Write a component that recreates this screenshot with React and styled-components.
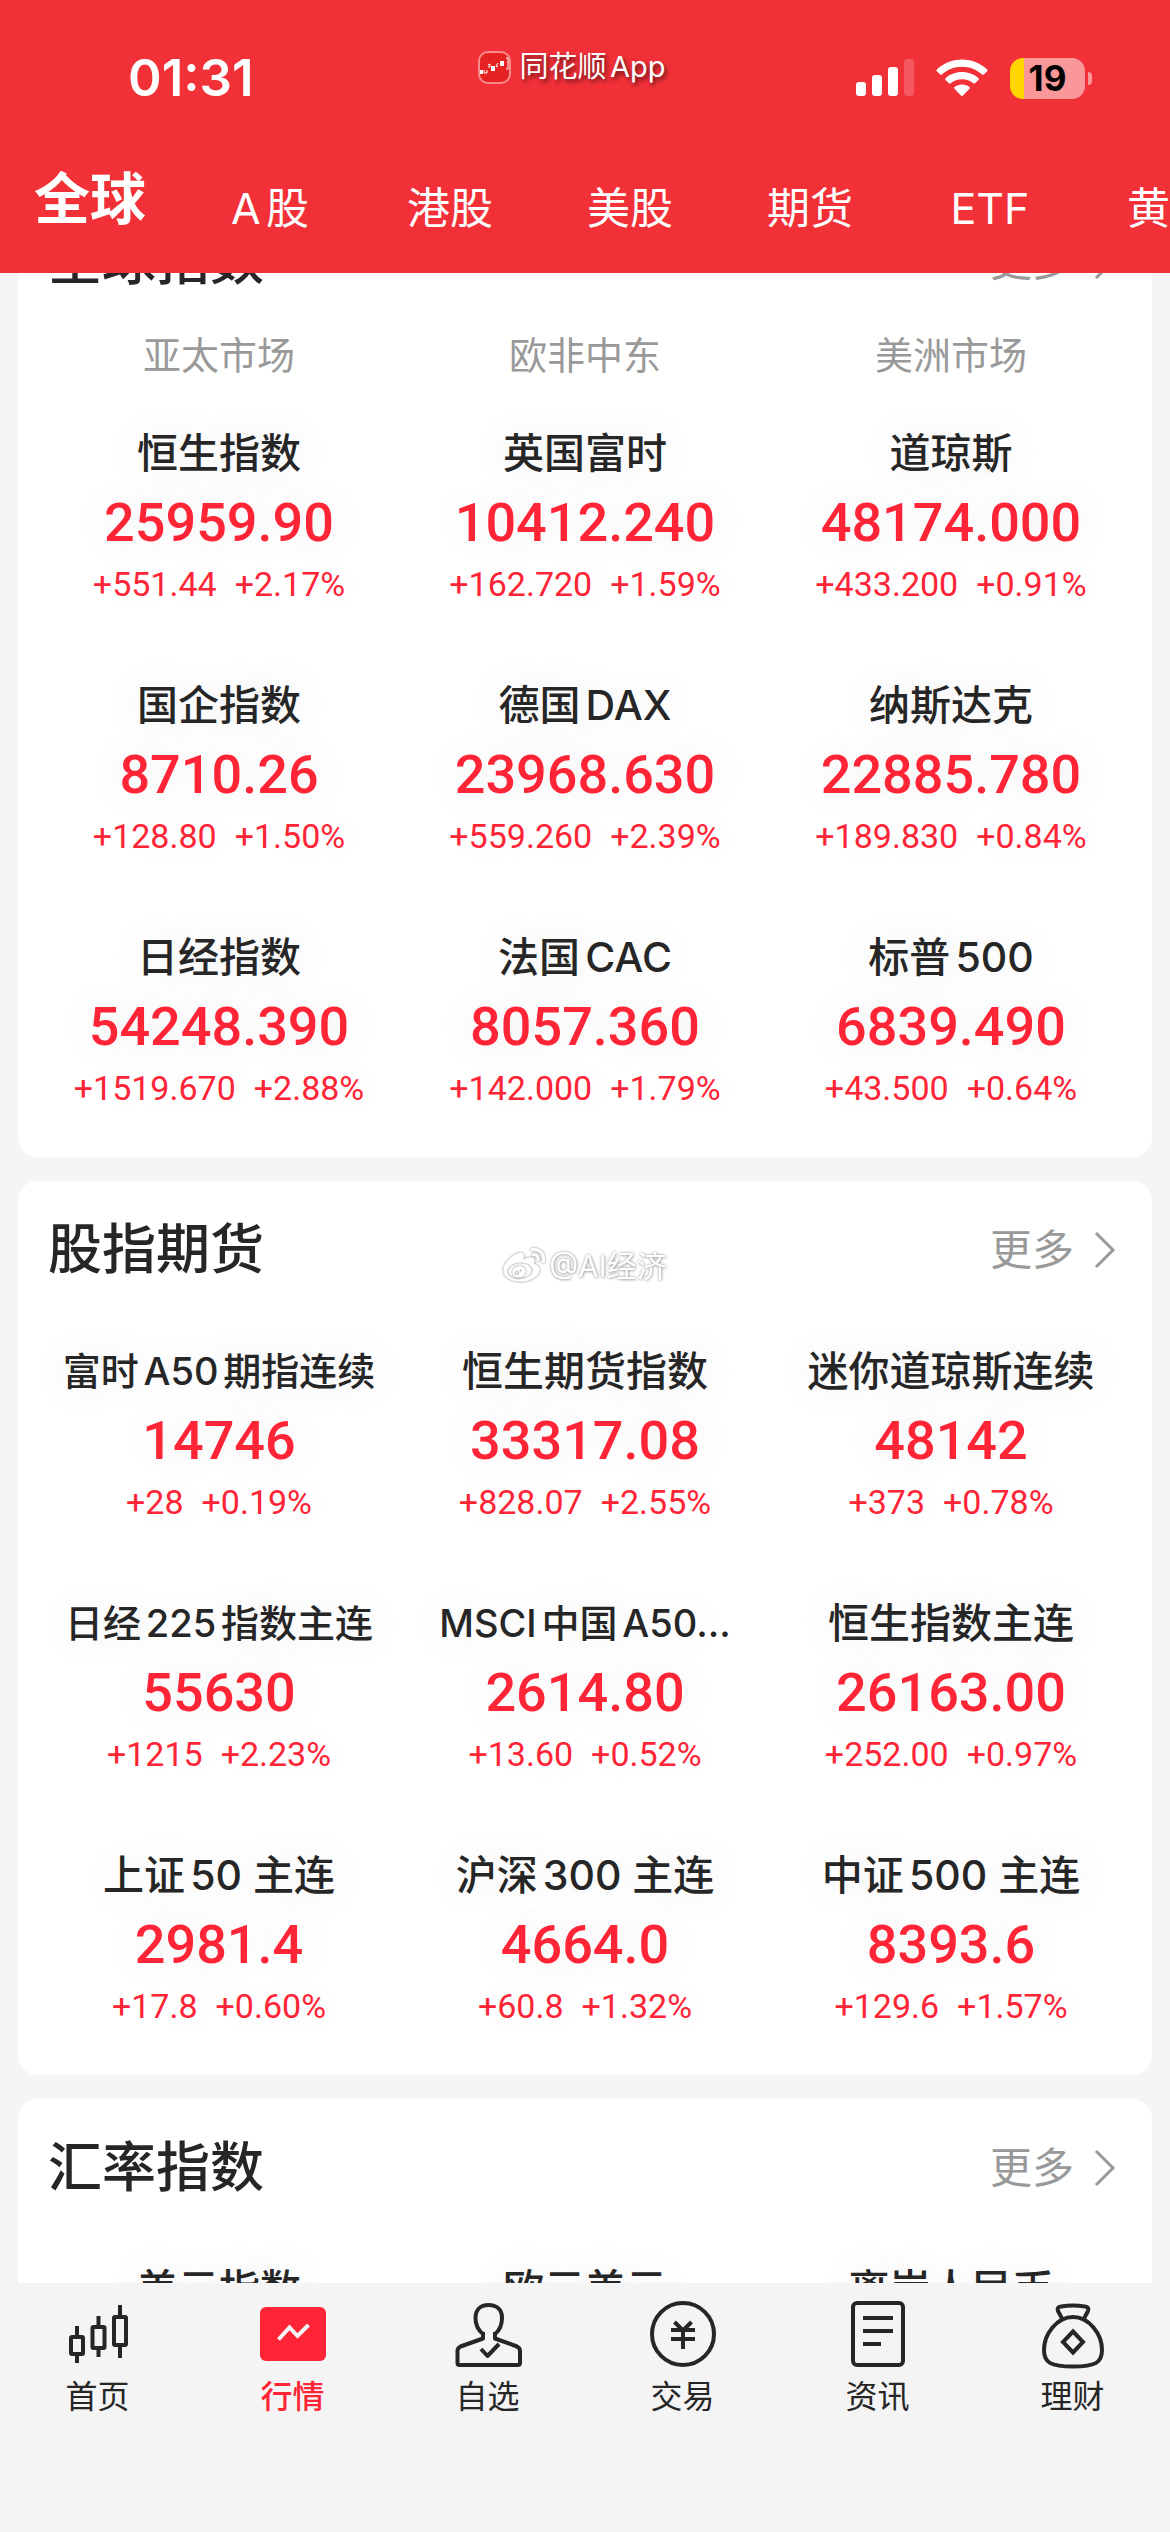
import React, { useLayoutEffect, useRef } from 'react';
import styled, { createGlobalStyle, css } from 'styled-components';
import { FaWeibo } from 'react-icons/fa';

const red = '#ff2436';
const dark = '#262626';
const grey = '#999';
const cjk = `'Noto Sans CJK SC', sans-serif`;
const digits = `Roboto, 'Noto Sans CJK SC', sans-serif`;

// the page opens with the first card title already half under the header
const initialScroll = 105;

const GlobalStyle = createGlobalStyle`
  * {
    box-sizing: border-box;
  }
  body {
    margin: 0;
    background: #f5f5f5;
    color: ${dark};
    font-family: Inter, ${cjk};
    text-autospace: normal;
  }
  button {
    border: 0;
    padding: 0;
    background: none;
    font: inherit;
    color: inherit;
  }
  h2, h3, p {
    margin: 0;
    padding: 0;
    font-weight: inherit;
  }
  a {
    color: inherit;
    text-decoration: none;
  }
`;

const Page = styled.div`
  display: flex;
  flex-direction: column;
  height: 100vh;
`;

const Header = styled.header`
  flex: none;
  background: #f23038;
  color: #fff;
`;

const StatusBar = styled.div`
  display: grid;
  grid-template-columns: 1fr auto 1fr;
  padding: 44px 78px 0 128px;
  height: 156px;
`;

const Clock = styled.div`
  font-size: 51px;
  font-weight: 600;
  line-height: 68px;
`;

const AppLabel = styled.div`
  display: flex;
  align-items: center;
  gap: 8px;
  height: 46px;
  padding-right: 76px;
  font-size: 29px;
  line-height: 46px;
  text-shadow: 2px 3px 4px rgba(0, 0, 0, 0.6);
`;

const Indicators = styled.div`
  display: flex;
  align-items: center;
  justify-content: flex-end;
  gap: 22px;
  height: 68px;
`;

const Battery = styled.div`
  display: flex;
  align-items: center;
  gap: 3px;
`;

const BatteryBody = styled.div`
  width: 75px;
  height: 41px;
  border-radius: 13px;
  background: linear-gradient(to right, #ffd600 14px, #f99799 14px);
  color: #000;
  font-size: 35px;
  font-weight: 700;
  line-height: 41px;
  text-align: center;
`;

const BatteryTip = styled.div`
  width: 4px;
  height: 13px;
  border-radius: 0 4px 4px 0;
  background: #f99799;
`;

const MarketTabs = styled.nav`
  display: flex;
  height: 117px;
  padding-bottom: 30px;
  overflow: hidden;
`;

const MarketTab = styled.button`
  flex: none;
  width: 180px;
  padding: 18px 0 2px;
  font-size: 43px;
  line-height: 60px;
  white-space: nowrap;

  ${props => props.$active && css`
    padding-top: 0;
    font-size: 56px;
    font-weight: 700;
    line-height: 78px;
  `}
`;

const Content = styled.main`
  flex: 1;
  min-height: 0;
  display: flex;
  flex-direction: column;
  gap: 24px;
  padding: 24px 18px;
  overflow-y: auto;
  scrollbar-width: none;
`;

const Card = styled.section`
  flex: none;
  border-radius: 20px;
  background: #fff;
`;

const CardHeader = styled.div`
  display: flex;
  align-items: center;
  justify-content: space-between;
  height: 138px;
  padding: 0 36px 0 30px;
`;

const CardTitle = styled.h2`
  font-size: 54px;
  font-weight: 500;
  line-height: 78px;
`;

const More = styled.a`
  display: flex;
  align-items: center;
  gap: 20px;
  color: ${grey};
  font-size: 42px;
  line-height: 60px;
`;

const Grid = styled.div`
  display: grid;
  grid-template-columns: repeat(3, 1fr);
  padding: 0 18px;
  text-align: center;
`;

const Region = styled.h3`
  padding-bottom: 21px;
  color: ${grey};
  font-size: 38px;
  line-height: 50px;
`;

const Cell = styled.article`
  min-height: 252px;
  padding: 24px 0 50px;
  text-shadow: 0 0 40px rgba(0, 0, 0, 0.1);
`;

const Name = styled.h3`
  font-size: ${props => (props.$small ? 38 : 41)}px;
  font-weight: 500;
  line-height: 56px;
  white-space: nowrap;
`;

const Price = styled.p`
  color: ${red};
  font-family: ${digits};
  font-size: 54px;
  font-weight: 500;
  line-height: 84px;
`;

const Change = styled.p`
  display: flex;
  justify-content: center;
  gap: 18px;
  color: ${red};
  font-family: ${digits};
  font-size: 34px;
  line-height: 38px;
`;

const TabBar = styled.nav`
  flex: none;
  display: flex;
  padding: 15px 0 116px;
  background: #f4f4f4;
`;

const TabItem = styled.button`
  flex: 1;
  display: flex;
  flex-direction: column;
  align-items: center;
  gap: 8px;
  color: ${props => (props.$active ? red : dark)};
  font-size: 32px;
  font-weight: ${props => (props.$active ? 500 : 400)};
  line-height: 38px;
`;

const Watermark = styled.div`
  position: fixed;
  top: 50%;
  left: 50%;
  transform: translate(-50%, -50%);
  display: flex;
  align-items: center;
  gap: 4px;
  color: #fff;
  font-size: 30px;
  line-height: 40px;
  white-space: nowrap;
  pointer-events: none;
  text-autospace: no-autospace;
  text-shadow: 0 0 3px rgba(0, 0, 0, 0.4), 1px 1px 3px rgba(0, 0, 0, 0.2);

  svg {
    filter: drop-shadow(0 0 1px rgba(0, 0, 0, 0.5));
  }
`;

const marketTabs = ['全球', 'A股', '港股', '美股', '期货', 'ETF', '黄金'];

const cards = [
  {
    title: '全球指数',
    regions: ['亚太市场', '欧非中东', '美洲市场'],
    items: [
      { name: '恒生指数', price: '25959.90', diff: '+551.44', percent: '+2.17%' },
      { name: '英国富时', price: '10412.240', diff: '+162.720', percent: '+1.59%' },
      { name: '道琼斯', price: '48174.000', diff: '+433.200', percent: '+0.91%' },
      { name: '国企指数', price: '8710.26', diff: '+128.80', percent: '+1.50%' },
      { name: '德国DAX', price: '23968.630', diff: '+559.260', percent: '+2.39%' },
      { name: '纳斯达克', price: '22885.780', diff: '+189.830', percent: '+0.84%' },
      { name: '日经指数', price: '54248.390', diff: '+1519.670', percent: '+2.88%' },
      { name: '法国CAC', price: '8057.360', diff: '+142.000', percent: '+1.79%' },
      { name: '标普500', price: '6839.490', diff: '+43.500', percent: '+0.64%' }
    ]
  },
  {
    title: '股指期货',
    items: [
      { name: '富时A50期指连续', small: true, price: '14746', diff: '+28', percent: '+0.19%' },
      { name: '恒生期货指数', price: '33317.08', diff: '+828.07', percent: '+2.55%' },
      { name: '迷你道琼斯连续', price: '48142', diff: '+373', percent: '+0.78%' },
      { name: '日经225指数主连', small: true, price: '55630', diff: '+1215', percent: '+2.23%' },
      { name: 'MSCI中国A50...', small: true, price: '2614.80', diff: '+13.60', percent: '+0.52%' },
      { name: '恒生指数主连', price: '26163.00', diff: '+252.00', percent: '+0.97%' },
      { name: '上证50 主连', price: '2981.4', diff: '+17.8', percent: '+0.60%' },
      { name: '沪深300 主连', price: '4664.0', diff: '+60.8', percent: '+1.32%' },
      { name: '中证500 主连', price: '8393.6', diff: '+129.6', percent: '+1.57%' }
    ]
  },
  {
    title: '汇率指数',
    items: [{ name: '美元指数' }, { name: '欧元美元' }, { name: '离岸人民币' }]
  }
];

const Icon = ({ children }) => (
  <svg width="72" height="72" viewBox="0 0 72 72" fill="none" stroke="currentColor" strokeWidth="4" strokeLinejoin="round" aria-hidden="true">
    {children}
  </svg>
);

const bottomTabs = [
  {
    label: '首页',
    icon: (
      <Icon>
        <rect x="9" y="39" width="12" height="17" rx="1" />
        <path d="M15 28v11M15 56v9" />
        <rect x="30.500" y="29" width="12" height="21" rx="1" />
        <path d="M36.500 18v11M36.500 50v9" />
        <rect x="52" y="19" width="12" height="28" rx="1" />
        <path d="M58 7v12M58 47v13" />
      </Icon>
    )
  },
  {
    label: '行情',
    active: true,
    icon: (
      <Icon>
        <rect x="3" y="9" width="66" height="54" rx="6" fill="currentColor" stroke="none" />
        <path d="M21.500 41.500L32.500 29.500L40.500 38L51.500 27" stroke="#f4f4f4" strokeLinejoin="miter" />
      </Icon>
    )
  },
  {
    label: '自选',
    icon: (
      <Icon>
        <path d="M31 34v6.500L8.500 48.500Q5.500 50 5.500 53V65Q5.500 67 7.500 67H66Q68 67 68 65V53Q68 50 65 48.500L43 40.500V34" />
        <path d="M31 36C26.500 32.500 23.500 27 23.500 20C23.500 11.500 28.500 7 36.500 7S50 11.500 50 20C50 27 47.500 32.500 43 36" />
        <path d="M29 51L35.500 58L47 46" />
      </Icon>
    )
  },
  {
    label: '交易',
    icon: (
      <Icon>
        <circle cx="36" cy="36" r="31" />
        <path d="M27.500 24L36 32.500L44.500 24M24 32h24M24 41h24M36 32v19" />
      </Icon>
    )
  },
  {
    label: '资讯',
    icon: (
      <Icon>
        <rect x="11" y="5" width="50" height="62" rx="4" />
        <path d="M21 20h30M21 33h30M21 46h18" />
      </Icon>
    )
  },
  {
    label: '理财',
    icon: (
      <Icon>
        <path d="M25 20.500L21 13Q19.500 9 24 8.500Q36 6.500 48 8.500Q52.500 9 51 13L47 20.500" />
        <path d="M36 19C20 19 7 36 7 52C7 65 14 68.500 36 68.500S65 65 65 52C65 36 52 19 36 19Z" />
        <path d="M36 33.500L46 44L36 54.500L26 44Z" strokeLinejoin="miter" />
      </Icon>
    )
  }
];

const AppLogo = () => (
  <svg width="33" height="33" viewBox="0 0 33 33" fill="none" aria-hidden="true">
    <rect x="1" y="1" width="31" height="31" rx="9" fill="#e62222" stroke="#f98a8c" strokeWidth="2" />
    <path d="M2 19h3v4H2zM13 15h4v5h-4zM22 10h4v5h-4z" fill="#fff" />
    <path d="M6 19v3h3v-3M10 14l2-1v3h-2M20 12l-2 3 2 1M28 7h2v11h-2" stroke="#fff" />
  </svg>
);

const Signal = () => (
  <svg width="58" height="38" viewBox="0 0 58 38" fill="#fff" aria-hidden="true">
    <rect x="0" y="23" width="10" height="14" rx="3" />
    <rect x="16" y="16" width="10" height="21" rx="3" />
    <rect x="32" y="8" width="10" height="29" rx="3" />
    <rect x="48" y="0" width="10" height="37" rx="3" opacity="0.2" />
  </svg>
);

const Wifi = () => (
  <svg width="52" height="38" viewBox="0 0 52 38" fill="#fff" aria-hidden="true">
    <path d="M26 0.500C16 0.500 7 4.500 0.800 10.500Q0 11.500 0.800 12.300L4.200 15.600Q5 16.400 5.900 15.600C11.500 10.500 18.500 7.800 26 7.800S40.500 10.500 46.100 15.600Q47 16.400 47.800 15.600L51.200 12.300Q52 11.500 51.200 10.500C45 4.500 36 0.500 26 0.500Z" />
    <path d="M26 13C19.500 13 13.800 15.300 9.500 19.200Q8.600 20 9.500 20.900L13 24.200Q13.800 25 14.700 24.200C17.800 21.600 21.700 20.200 26 20.200S34.200 21.600 37.300 24.200Q38.200 25 39 24.200L42.500 20.900Q43.400 20 42.500 19.200C38.200 15.300 32.500 13 26 13Z" />
    <path d="M26 25.500C23 25.500 20.500 26.500 18.500 28.100Q17.600 28.900 18.500 29.800L25.200 36.800Q26 37.500 26.800 36.800L33.500 29.800Q34.400 28.900 33.500 28.100C31.500 26.500 29 25.500 26 25.500Z" />
  </svg>
);

const Chevron = () => (
  <svg width="22" height="38" viewBox="0 0 22 38" fill="none" stroke="currentColor" strokeWidth="3" aria-hidden="true">
    <path d="M2 2l17 17L2 36" />
  </svg>
);

const Quote = props => (
  <Cell>
    <Name $small={props.small}>{props.name}</Name>
    {props.price && <Price>{props.price}</Price>}
    {props.diff && (
      <Change>
        <span>{props.diff}</span>
        <span>{props.percent}</span>
      </Change>
    )}
  </Cell>
);

const App = () => {
  const content = useRef(null);

  useLayoutEffect(() => {
    content.current.scrollTop = initialScroll;
  }, []);

  return (
    <Page>
      <GlobalStyle />
      <Header>
        <StatusBar>
          <Clock>01:31</Clock>
          <AppLabel><AppLogo /> <span>同花顺App</span></AppLabel>
          <Indicators>
            <Signal />
            <Wifi />
            <Battery>
              <BatteryBody>19</BatteryBody>
              <BatteryTip />
            </Battery>
          </Indicators>
        </StatusBar>
        <MarketTabs>
          {marketTabs.map((tab, i) => (
            <MarketTab key={tab} type="button" $active={i === 0}>{tab}</MarketTab>
          ))}
        </MarketTabs>
      </Header>

      <Content ref={content}>
        {cards.map(card => (
          <Card key={card.title}>
            <CardHeader>
              <CardTitle>{card.title}</CardTitle>
              <More href="#more">更多 <Chevron /></More>
            </CardHeader>
            <Grid>
              {card.regions && card.regions.map(region => <Region key={region}>{region}</Region>)}
              {card.items.map(item => <Quote key={item.name} {...item} />)}
            </Grid>
          </Card>
        ))}
      </Content>

      <TabBar>
        {bottomTabs.map(tab => (
          <TabItem key={tab.label} type="button" $active={tab.active}>
            {tab.icon}
            {tab.label}
          </TabItem>
        ))}
      </TabBar>

      <Watermark><FaWeibo size={42} /> @AI经济</Watermark>
    </Page>
  );
};

export default App;
